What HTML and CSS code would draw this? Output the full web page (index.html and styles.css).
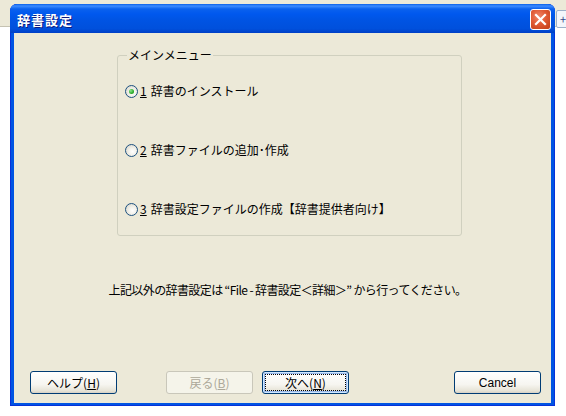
FILE: index.html
```html
<!DOCTYPE html>
<html><head>
<meta charset="utf-8"><link rel="stylesheet" href="styles.css">
</head><body>
<div class="desktop">
	<div class="toolbar"><span class="tbtn">+</span></div>
	<div class="window">
		<div class="titlebar">
			<span class="title">辞書設定</span>
			<span class="close"><svg width="13" height="13" viewBox="0 0 13 13"><path d="M2 2 L11 11 M11 2 L2 11" stroke="#fff" stroke-width="2.2" stroke-linecap="square"/></svg></span>
		</div>
		<div class="dlgbody">
			<fieldset class="group">
				<legend>メインメニュー</legend>
				<label class="radio"><span class="dot checked"></span><u>1</u><span>辞書のインストール</span></label>
				<label class="radio"><span class="dot"></span><u>2</u><span>辞書ファイルの追加･作成</span></label>
				<label class="radio"><span class="dot"></span><u>3</u><span>辞書設定ファイルの作成【辞書提供者向け】</span></label>
			</fieldset>
			<p class="note">上記以外の辞書設定は “File - 辞書設定＜詳細＞” から行ってください。</p>
			<div class="buttons">
				<span class="btn">ヘルプ(<u>H</u>)</span>
				<span class="btn disabled back">戻る(<u>B</u>)</span>
				<span class="btn focus">次へ(<u>N</u>)</span>
				<span class="btn cancel">Cancel</span>
			</div>
		</div>
	</div>
</div>
</body></html>
```

FILE: styles.css
```css
html,body{margin:0;padding:0;}
body{width:566px;height:416px;overflow:hidden;background:#fff;font-family:"Noto Sans CJK JP","DejaVu Sans",sans-serif;font-size:12px;color:#000;}
.desktop{position:relative;height:416px;}
.toolbar{height:26px;background:#ece9d8;border-bottom:1px solid #c5c2b2;}
.tbtn{position:absolute;right:-6px;top:10px;width:14px;height:16px;border:1px solid #9db0c9;border-radius:2px;background:#f3f6fb;font-size:11px;line-height:16px;color:#34488a;text-indent:3px;}
.window{position:absolute;left:10px;top:4px;width:545px;height:402px;display:flex;flex-direction:column;border-radius:7px 7px 0 0;background:#0054e3;box-shadow:inset 0 0 0 1px #0831d9;}
.titlebar{height:29px;display:flex;align-items:center;justify-content:space-between;padding:0 4px 0 7px;border-radius:7px 7px 0 0;background:linear-gradient(#0a5fe8 0,#3d8cff 2px,#0a61ee 5px,#0058ee 10px,#0054e3 55%,#0050dc 85%,#003fc6 100%);}
.title{color:#fff;font-weight:bold;font-size:13px;letter-spacing:1px;text-shadow:1px 1px 0 #0a1a80;margin-top:1px;}
.close{width:19px;height:19px;display:flex;align-items:center;justify-content:center;border:1px solid #fff;border-radius:3px;background:radial-gradient(circle at 40% 35%,#f0876a 0,#e05a35 45%,#c13d15 100%);margin-top:1px;}
.dlgbody{flex:1;margin:0 4px 3px 4px;background:#ece9d8;display:flex;flex-direction:column;}
.group{margin:15px 0 0 103px;padding:22px 0 0 7px;width:336px;height:164px;border:1px solid #d0d0bf;border-radius:3px;display:flex;flex-direction:column;gap:45px;}
.group legend{padding:0 1px;margin-left:2px;line-height:14px;color:#000;}
.radio{display:flex;align-items:center;height:14px;line-height:14px;white-space:nowrap;}
.radio u{margin:0 4px 0 2px;}
.dot{width:11px;height:11px;border:1px solid #1c5180;border-radius:50%;background:radial-gradient(circle at 60% 60%,#fff 0,#f2f1ea 40%,#d0cec2 100%);display:flex;align-items:center;justify-content:center;}
.dot.checked::after{content:"";width:5px;height:5px;border-radius:50%;background:radial-gradient(circle at 35% 35%,#8de48d 0,#2aab2a 60%,#178c17 100%);}
.note{margin:47px 0 0 0;text-align:center;line-height:14px;padding-left:10px;letter-spacing:-0.6px;}
.buttons{margin-top:auto;margin-bottom:9px;padding:0 10px 0 16px;display:flex;}
.btn{width:85px;height:21px;border:1px solid #003c74;border-radius:3px;background:linear-gradient(#ffffff 0,#f6f5f0 60%,#e6e3d6 90%,#d6d0c5 100%);display:flex;align-items:center;justify-content:center;line-height:14px;}
.btn.back{margin-left:49px;}
.btn.disabled{border-color:#c9c7ba;background:#f5f4ea;color:#aca899;}
.btn.focus{margin-left:9px;box-shadow:inset 0 0 0 1px #cee7ff,inset 0 0 0 2px #98b8ea;outline:1px dotted #000;outline-offset:-4px;}
.btn.cancel{margin-left:auto;font-family:"Liberation Sans",sans-serif;}
```
